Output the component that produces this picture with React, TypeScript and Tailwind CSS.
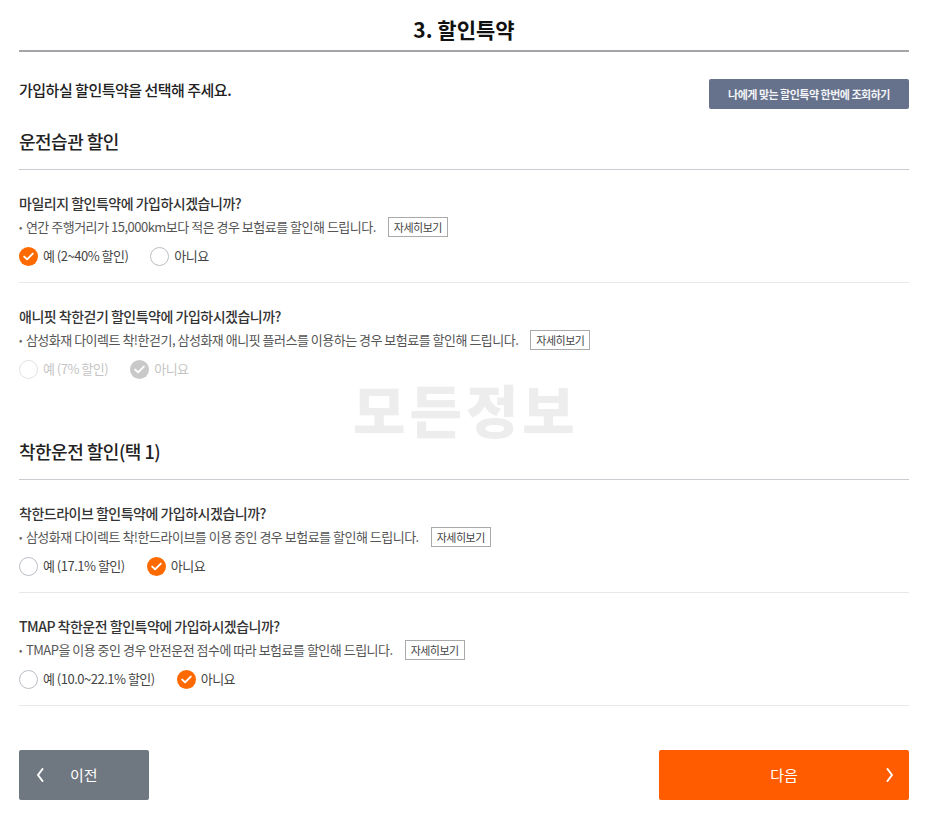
import React from 'react';

type Opt = { label: string; checked?: boolean };

type Question = {
    title: string;
    desc: string;
    options: Opt[];
    disabled?: boolean;
    divider?: boolean;
};

const habitQuestions: Question[] = [
    {
        title: '마일리지 할인특약에 가입하시겠습니까?',
        desc: '연간 주행거리가 15,000km보다 적은 경우 보험료를 할인해 드립니다.',
        options: [{ label: '예 (2~40% 할인)', checked: true }, { label: '아니요' }],
        divider: true,
    },
    {
        title: '애니핏 착한걷기 할인특약에 가입하시겠습니까?',
        desc: '삼성화재 다이렉트 착!한걷기, 삼성화재 애니핏 플러스를 이용하는 경우 보험료를 할인해 드립니다.',
        options: [{ label: '예 (7% 할인)' }, { label: '아니요', checked: true }],
        disabled: true,
    },
];

const driveQuestions: Question[] = [
    {
        title: '착한드라이브 할인특약에 가입하시겠습니까?',
        desc: '삼성화재 다이렉트 착!한드라이브를 이용 중인 경우 보험료를 할인해 드립니다.',
        options: [{ label: '예 (17.1% 할인)' }, { label: '아니요', checked: true }],
        divider: true,
    },
    {
        title: 'TMAP 착한운전 할인특약에 가입하시겠습니까?',
        desc: 'TMAP을 이용 중인 경우 안전운전 점수에 따라 보험료를 할인해 드립니다.',
        options: [{ label: '예 (10.0~22.1% 할인)' }, { label: '아니요', checked: true }],
        divider: true,
    },
];

const RadioIcon: React.FC<{ checked?: boolean; disabled?: boolean }> = ({ checked, disabled }) => {
    if (checked) {
        return (
            <span
                className={`flex h-[19px] w-[19px] items-center justify-center rounded-full ${
                    disabled ? 'bg-[#c9c9c9]' : 'bg-[#ff6a00]'
                }`}
            >
                <svg width="11" height="9" viewBox="0 0 11 9" fill="none">
                    <path d="M1.2 4.6 L4.1 7.3 L9.8 1.6" stroke="white" strokeWidth="1.9" strokeLinecap="round" strokeLinejoin="round" />
                </svg>
            </span>
        );
    }
    return (
        <span
            className={`h-[19px] w-[19px] rounded-full border bg-white ${
                disabled ? 'border-[#e2e2e2]' : 'border-[#b9bec4]'
            }`}
        />
    );
};

const QuestionBlock: React.FC<{ q: Question }> = ({ q }) => (
    <div className={q.divider ? 'border-b border-[#e6e8eb]' : ''}>
        <div className="pt-[23px] text-[14px] leading-[20px] font-medium tracking-[-0.5px] text-[#333]">{q.title}</div>
        <div className="mt-[4px] flex items-center text-[13px] leading-[20px] tracking-[-0.5px] text-[#555]">
            <span className="mr-[4px] text-[10px] text-[#666]">•</span>
            <span>{q.desc}</span>
            <span className="ml-[12px] flex h-[20px] items-center border border-[#aaa] px-[5px] text-[11px] text-[#444]">
                자세히보기
            </span>
        </div>
        <div
            className={`mt-[8px] flex items-center gap-[22px] pb-[15px] text-[13px] tracking-[-0.5px] ${
                q.disabled ? 'text-[#c4c4c4]' : 'text-[#444]'
            }`}
        >
            {q.options.map((o) => (
                <label key={o.label} className="flex h-[22px] items-center gap-[5px]">
                    <RadioIcon checked={o.checked} disabled={q.disabled} />
                    <span>{o.label}</span>
                </label>
            ))}
        </div>
    </div>
);

const SectionHeading: React.FC<{ children: React.ReactNode; className?: string }> = ({ children, className }) => (
    <div className={`border-b border-[#c8cbd0] pb-[15px] ${className ?? ''}`}>
        <h3 className="text-[18px] leading-[26px] font-medium tracking-[-0.5px] text-[#222]">{children}</h3>
    </div>
);

const App: React.FC = () => {
    return (
        <div
            className="min-h-[817px] bg-white"
            style={{ fontFamily: '"Noto Sans CJK KR", "Noto Sans", sans-serif' }}
        >
            <div className="relative ml-[19px] w-[890px]">
                <h2 className="pt-[14px] pb-[6px] text-center text-[21px] leading-[30px] font-bold text-[#111]">
                    3. 할인특약
                </h2>
                <div className="h-[2px] bg-[#a3a5a8]" />

                <div className="mt-[27px] flex items-start justify-between">
                    <p className="pt-[1px] text-[15px] leading-[20px] font-medium tracking-[-0.5px] text-[#222]">
                        가입하실 할인특약을 선택해 주세요.
                    </p>
                    <button className="h-[30px] w-[200px] rounded-[2px] bg-[#66718b] text-[11px] font-bold tracking-[-0.5px] text-[#f2f4f8]">
                        나에게 맞는 할인특약 한번에 조회하기
                    </button>
                </div>

                <SectionHeading className="mt-[19px]">운전습관 할인</SectionHeading>
                {habitQuestions.map((q) => (
                    <QuestionBlock key={q.title} q={q} />
                ))}

                <SectionHeading className="mt-[43px]">착한운전 할인(택 1)</SectionHeading>
                {driveQuestions.map((q) => (
                    <QuestionBlock key={q.title} q={q} />
                ))}

                <div className="mt-[44px] flex justify-between">
                    <button className="flex h-[50px] w-[130px] items-center rounded-[2px] bg-[#6f7780] pl-[16px] text-[15px] text-white">
                        <svg width="10" height="16" viewBox="0 0 10 16" fill="none">
                            <path d="M7.5 2 L3 8 L7.5 14" stroke="white" strokeWidth="2" strokeLinecap="round" strokeLinejoin="round" />
                        </svg>
                        <span className="ml-[25px]">이전</span>
                    </button>
                    <button className="relative flex h-[50px] w-[250px] items-center justify-center rounded-[2px] bg-[#ff5c00] text-[15px] text-white">
                        <span>다음</span>
                        <svg className="absolute right-[14px]" width="10" height="16" viewBox="0 0 10 16" fill="none">
                            <path d="M2.5 2 L7 8 L2.5 14" stroke="white" strokeWidth="2" strokeLinecap="round" strokeLinejoin="round" />
                        </svg>
                    </button>
                </div>

                <div className="pointer-events-none absolute left-[334px] top-[373px] text-[57px] leading-[70px] font-black tracking-[4px] text-[#ededed]">
                    모든정보
                </div>
            </div>
        </div>
    );
};

export default App;
